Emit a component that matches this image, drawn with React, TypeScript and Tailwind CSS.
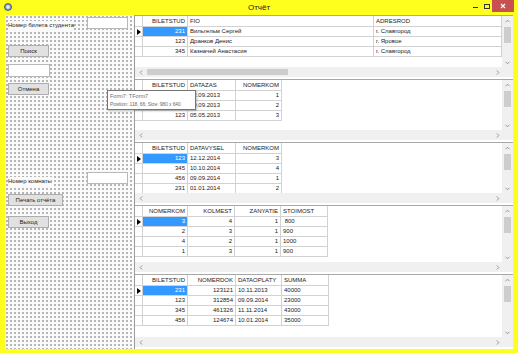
import React from 'react';

interface Col {
  title: string;
  w: string;
  align: 'left' | 'right';
}

interface GridDef {
  h: string;
  cols: Col[];
  rows: string[][];
  thumb?: boolean;
}

const Chevron: React.FC<{ dir: 'up' | 'down' | 'left' | 'right' }> = ({ dir }) => {
  const paths = {
    up: 'M1.5 4.2 L3.5 2.2 L5.5 4.2',
    down: 'M1.5 2.8 L3.5 4.8 L5.5 2.8',
    left: 'M4.2 1.5 L2.2 3.5 L4.2 5.5',
    right: 'M2.8 1.5 L4.8 3.5 L2.8 5.5',
  };
  return (
    <svg width="7" height="7" viewBox="0 0 7 7">
      <path d={paths[dir]} fill="none" stroke="#8c8c8c" strokeWidth="0.9" />
    </svg>
  );
};

const grids: GridDef[] = [
  {
    h: 'h-[64px]',
    thumb: true,
    cols: [
      { title: 'BILETSTUD', w: 'w-[45px]', align: 'right' },
      { title: 'FIO', w: 'w-[186px]', align: 'left' },
      { title: 'ADRESROD', w: 'flex-1', align: 'left' },
    ],
    rows: [
      ['231', 'Вильгельм Сергей', 'г. Славгород'],
      ['123', 'Дранков Денис', 'г. Яровое'],
      ['345', 'Казначей Анастасия', 'г. Славгород'],
    ],
  },
  {
    h: 'h-[63px]',
    cols: [
      { title: 'BILETSTUD', w: 'w-[45px]', align: 'right' },
      { title: 'DATAZAS', w: 'w-[48px]', align: 'left' },
      { title: 'NOMERKOM', w: 'w-[46px]', align: 'right' },
    ],
    rows: [
      ['231', '12.09.2013', '1'],
      ['345', '10.09.2013', '2'],
      ['123', '05.05.2013', '3'],
    ],
  },
  {
    h: 'h-[63px]',
    cols: [
      { title: 'BILETSTUD', w: 'w-[45px]', align: 'right' },
      { title: 'DATAVYSEL', w: 'w-[48px]', align: 'left' },
      { title: 'NOMERKOM', w: 'w-[46px]', align: 'right' },
    ],
    rows: [
      ['123', '12.12.2014', '3'],
      ['345', '10.10.2014', '4'],
      ['456', '09.09.2014', '1'],
      ['231', '01.01.2014', '2'],
    ],
  },
  {
    h: 'h-[69px]',
    cols: [
      { title: 'NOMERKOM', w: 'w-[45px]', align: 'right' },
      { title: 'KOLMEST', w: 'w-[47px]', align: 'right' },
      { title: 'ZANYATIE', w: 'w-[46px]', align: 'right' },
      { title: 'STOIMOST', w: 'w-[47px]', align: 'left' },
    ],
    rows: [
      ['3', '4', '1', ' 800'],
      ['2', '3', '1', '900'],
      ['4', '2', '1', '1000'],
      ['1', '3', '1', '900'],
    ],
  },
  {
    h: 'h-[75px]',
    cols: [
      { title: 'BILETSTUD', w: 'w-[45px]', align: 'right' },
      { title: 'NOMERDOK', w: 'w-[48px]', align: 'right' },
      { title: 'DATAOPLATY', w: 'w-[46px]', align: 'left' },
      { title: 'SUMMA', w: 'w-[47px]', align: 'left' },
    ],
    rows: [
      ['231', '123121', '10.11.2013', '40000'],
      ['123', '312854', '09.09.2014', '23000'],
      ['345', '461326', '11.11.2014', '43000'],
      ['456', '124674', '10.01.2014', '35000'],
    ],
  },
];

const DataGrid: React.FC<{ g: GridDef }> = ({ g }) => (
  <div className={`${g.h} flex flex-col border-t border-[#a8a8a8] bg-white pb-[2px]`}>
    <div className="flex min-h-0 flex-1">
      <div className="flex-1 overflow-hidden">
        <div className="flex h-[11px]">
          <div className="w-[8px] shrink-0 border-r border-b border-[#d2d2d2]" />
          {g.cols.map((c) => (
            <div
              key={c.title}
              className={`${c.w} shrink-0 truncate border-r border-b border-[#d2d2d2] px-[2px] leading-[10px] ${c.align === 'right' ? 'text-right' : 'text-left'}`}
            >
              {c.title}
            </div>
          ))}
        </div>
        {g.rows.map((r, i) => (
          <div key={i} className="flex h-[10px]">
            <div className="flex w-[8px] shrink-0 items-center justify-center border-r border-b border-[#d2d2d2]">
              {i === 0 && (
                <svg width="4" height="6" viewBox="0 0 4 6">
                  <path d="M0 0 L4 3 L0 6 Z" fill="#000" />
                </svg>
              )}
            </div>
            {r.map((v, j) => (
              <div
                key={j}
                className={`${g.cols[j].w} shrink-0 truncate border-r border-b border-[#d2d2d2] px-[2px] leading-[9px] whitespace-pre ${g.cols[j].align === 'right' ? 'text-right' : 'text-left'} ${i === 0 && j === 0 ? 'bg-[#3399ff] text-white' : ''}`}
              >
                {v}
              </div>
            ))}
          </div>
        ))}
      </div>
      <div className="flex w-[11px] flex-col items-center bg-[#f0f0f0]">
        <div className="flex h-[10px] items-center">
          <Chevron dir="up" />
        </div>
        <div className="mt-[1px] h-[16px] w-[7px] bg-[#cdcdcd]" />
        <div className="flex-1" />
        <div className="flex h-[10px] items-center">
          <Chevron dir="down" />
        </div>
      </div>
    </div>
    <div className="flex h-[10px] bg-[#f0f0f0]">
      <div className="flex w-[12px] items-center justify-center">
        <Chevron dir="left" />
      </div>
      {g.thumb && <div className="my-[2px] w-[141px] bg-[#cdcdcd]" />}
      <div className="flex-1" />
      <div className="flex w-[10px] items-center justify-center">
        <Chevron dir="right" />
      </div>
      <div className="w-[11px]" />
    </div>
  </div>
);

const Btn: React.FC<{ label: string; w: string; mt: string }> = ({ label, w, mt }) => (
  <div className={`${w} ${mt} ml-[3px] flex h-[12px] items-center justify-center border border-[#adadad] bg-[#e1e1e1] text-[#1a1a1a]`}>
    {label}
  </div>
);

const App: React.FC = () => {
  return (
    <div className="relative flex h-[353px] w-[518px] flex-col overflow-hidden bg-[#ffff1e] font-['Liberation_Sans',Arial,sans-serif] text-[6px] text-[#1a1a1a]">
      <div className="relative flex h-[15px] items-center justify-center">
        <div className="absolute top-[3px] left-[4px] h-[8px] w-[8px] rounded-full border border-[#4a5a78] bg-[radial-gradient(circle,#e8eef8_20%,#7a8cb0_70%)]" />
        <span className="text-[8px] text-[#222]">Отчёт</span>
        <div className="absolute top-0 right-[4px] flex h-[12px] items-stretch">
          <div className="flex w-[11px] items-center justify-center">
            <div className="mt-[2px] h-[1px] w-[5px] bg-[#333]" />
          </div>
          <div className="flex w-[11px] items-center justify-center">
            <div className="h-[5px] w-[6px] border border-[#333]" />
          </div>
          <div className="flex w-[22px] items-center justify-center bg-[#c75050]">
            <svg width="6" height="6" viewBox="0 0 6 6">
              <path d="M1 1 L5 5 M5 1 L1 5" stroke="#fff" strokeWidth="1.1" />
            </svg>
          </div>
        </div>
      </div>
      <div className="mx-[5px] mb-[4px] flex min-h-0 flex-1">
        <div className="flex w-[129px] shrink-0 flex-col bg-[#fafafa] bg-[radial-gradient(circle,#8a8a8a_0.55px,transparent_0.95px)] bg-[length:4px_4px]">
          <div className="mt-[1px] flex items-center justify-between pr-[6px] pl-[3px]">
            <span className="mt-[5px] bg-[#fafafa]">Номер билета студента</span>
            <div className="h-[12px] w-[41px] border border-[#b8b8b8] bg-white" />
          </div>
          <Btn label="Поиск" w="w-[41px]" mt="mt-[15px]" />
          <div className="mt-[7px] ml-[3px] h-[13px] w-[42px] border border-[#b8b8b8] bg-white" />
          <Btn label="Отмена" w="w-[41px]" mt="mt-[6px]" />
          <div className="mt-[74px] flex items-center justify-between pr-[6px] pl-[3px]">
            <span className="mt-[8px] bg-[#fafafa]">Номер комнаты</span>
            <div className="h-[12px] w-[41px] border border-[#b8b8b8] bg-white" />
          </div>
          <Btn label="Печать отчёта" w="w-[55px]" mt="mt-[8px]" />
          <Btn label="Выход" w="w-[41px]" mt="mt-[10px]" />
        </div>
        <div className="flex min-w-0 flex-1 flex-col border-l border-[#9a9a9a] bg-white">
          {grids.map((g, i) => (
            <DataGrid key={i} g={g} />
          ))}
        </div>
      </div>
      <div className="absolute top-[90px] left-[107px] h-[20px] w-[89px] border border-[#767676] bg-white px-[2px] pt-[1px] text-[5px] leading-[8px] text-[#6d6d6d] shadow-[1px_1px_2px_rgba(0,0,0,0.25)]">
        <div className="text-[5.5px]">Form7: TForm7</div>
        <div className="whitespace-nowrap tracking-[-0.1px]">Position: 118, 66; Size: 980 x 640</div>
      </div>
    </div>
  );
};

export default App;
